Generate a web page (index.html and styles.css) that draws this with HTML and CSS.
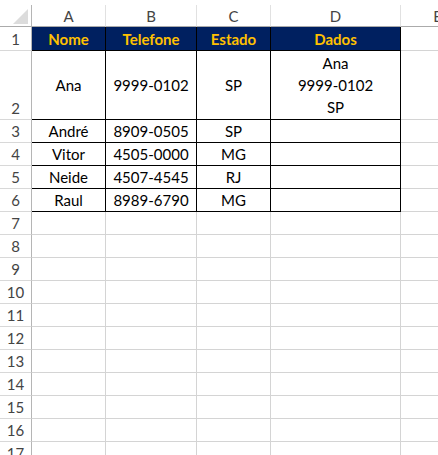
FILE: index.html
```html
<!DOCTYPE html>
<html>
<head>
  <title>Planilha</title>
  <meta charset="utf-8">
  <link rel="stylesheet" href="styles.css">
</head>
<body>
  <div class="sheet">
    <!-- column headers -->
    <div class="corner"><svg width="32" height="22"><polygon points="13,20 28,5 28,20" fill="#dcdcdc"/></svg></div>
    <div class="hd">A</div><div class="hd">B</div><div class="hd">C</div><div class="hd">D</div><div class="hd">E</div>

    <!-- 1 -->
    <div class="rh">1</div>
    <div class="c t top">Nome</div><div class="c t top">Telefone</div><div class="c t top">Estado</div><div class="c t top">Dados</div><div class="c"></div>

    <!-- 2 -->
    <div class="rh">2</div>
    <div class="c t mid">Ana</div><div class="c t mid">9999-0102</div><div class="c t mid">SP</div>
    <div class="c t mid wrap">Ana<br>9999-0102<br>SP</div><div class="c"></div>

    <div class="rh">3</div>
    <div class="c t">André</div><div class="c t">8909-0505</div><div class="c t">SP</div><div class="c t"></div><div class="c"></div>
    <div class="rh">4</div>
    <div class="c t">Vitor</div><div class="c t">4505-0000</div><div class="c t">MG</div><div class="c t"></div><div class="c"></div>
    <div class="rh">5</div>
    <div class="c t">Neide</div><div class="c t">4507-4545</div><div class="c t">RJ</div><div class="c t"></div><div class="c"></div>
    <div class="rh">6</div>
    <div class="c t">Raul</div><div class="c t">8989-6790</div><div class="c t">MG</div><div class="c t"></div><div class="c"></div>

    <div class="rh">7</div><div class="c"></div><div class="c"></div><div class="c"></div><div class="c"></div><div class="c"></div>
    <div class="rh">8</div><div class="c"></div><div class="c"></div><div class="c"></div><div class="c"></div><div class="c"></div>
    <div class="rh">9</div><div class="c"></div><div class="c"></div><div class="c"></div><div class="c"></div><div class="c"></div>
    <div class="rh">10</div><div class="c"></div><div class="c"></div><div class="c"></div><div class="c"></div><div class="c"></div>
    <div class="rh">11</div><div class="c"></div><div class="c"></div><div class="c"></div><div class="c"></div><div class="c"></div>
    <div class="rh">12</div><div class="c"></div><div class="c"></div><div class="c"></div><div class="c"></div><div class="c"></div>
    <div class="rh">13</div><div class="c"></div><div class="c"></div><div class="c"></div><div class="c"></div><div class="c"></div>
    <div class="rh">14</div><div class="c"></div><div class="c"></div><div class="c"></div><div class="c"></div><div class="c"></div>
    <div class="rh">15</div><div class="c"></div><div class="c"></div><div class="c"></div><div class="c"></div><div class="c"></div>
    <div class="rh">16</div><div class="c"></div><div class="c"></div><div class="c"></div><div class="c"></div><div class="c"></div>
    <div class="rh">17</div><div class="c"></div><div class="c"></div><div class="c"></div><div class="c"></div><div class="c"></div>
  </div>
</body>
</html>
```

FILE: styles.css
```css
body {
  margin: 0;
  background: #fff;
  overflow: hidden;
  font-family: Lato, "Open Sans", sans-serif;
  font-size: 15px;
  color: #000;
}

.sheet {
  display: grid;
  grid-template-columns: 32px 74px 91px 74px 130px 74px;
  grid-template-rows: 22px 24px 69px repeat(15, 23px);
  padding-top: 5px;
  width: 475px;
}

.sheet > div {
  box-sizing: border-box;
  display: flex;
  align-items: flex-end;
  justify-content: center;
  text-align: center;
  line-height: 22px;
  white-space: nowrap;
}

.corner {
  border-right: 1px solid #b5b5b5;
  border-bottom: 1px solid #ababab;
}

.hd {
  color: #444;
  align-items: center !important;
  border-right: 1px solid #e1e1e1;
  border-bottom: 1px solid #ababab;
}

.rh {
  color: #444;
  border-right: 1px solid #b5b5b5;
  border-bottom: 1px solid #d8d8d8;
}

.c {
  border-right: 1px solid #d4d4d4;
  border-bottom: 1px solid #d4d4d4;
}

.c.t {
  border-right-color: #000;
  border-bottom-color: #000;
}

.top {
  background: #002060;
  color: #ffc000;
  font-weight: bold;
  align-items: center !important;
}

.mid {
  align-items: center !important;
}

.wrap {
  line-height: 23px;
}
```
